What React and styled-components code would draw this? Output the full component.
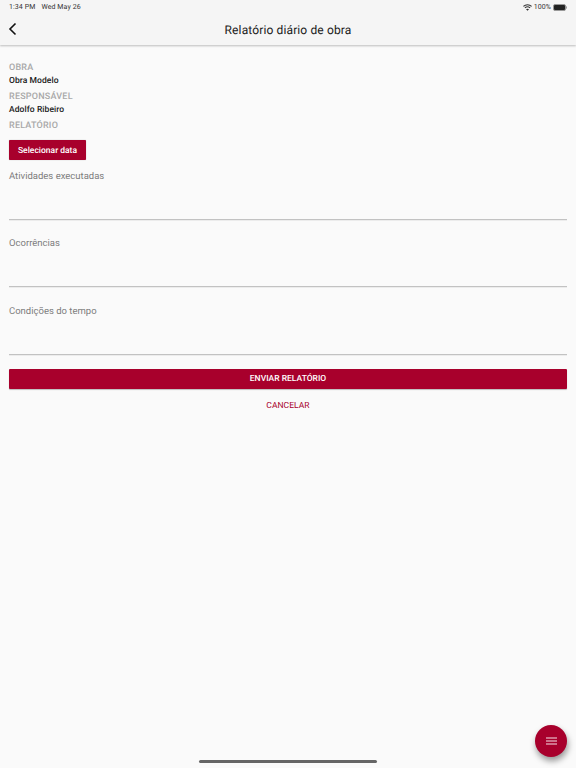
import React from "react";
import styled, { createGlobalStyle } from "styled-components";

const Global = createGlobalStyle`
  html, body { margin: 0; padding: 0; background: #fafafa; }
  body { font-family: Roboto, "Liberation Sans", sans-serif; text-rendering: geometricPrecision; }
`;
const Page = styled.div`
  position: relative; width: 576px; height: 768px; overflow: hidden;
  background: #fafafa; display: flex; flex-direction: column;
`;
const Header = styled.header`
  height: 45px; background: #f5f5f5; flex: none;
  box-shadow: 0 1px 2px rgba(0,0,0,.25);
  display: flex; flex-direction: column; position: relative;
`;
const StatusBar = styled.div`
  height: 14px; display: flex; justify-content: space-between; align-items: center;
  padding: 0 9px; font-size: 7px; color: #333; letter-spacing: .1px;
`;
const StatusGroup = styled.div`display: flex; align-items: center; gap: ${p => p.$gap || 3}px;`;
const NavBar = styled.div`
  flex: 1; display: flex; align-items: center; justify-content: center; position: relative;
`;
const Title = styled.h1`
  margin: 0; font-size: 12px; font-weight: 400; color: #212121; letter-spacing: .13px;
`;
const BackButton = styled.div`
  position: absolute; left: 8px; top: 8px; width: 10px; height: 14px; display: flex;
`;
const Content = styled.main`
  padding: 18px 9px 0; display: flex; flex-direction: column;
`;
const Caption = styled.div`
  font-size: 9px; font-weight: 500; color: #a8a8a8; letter-spacing: .22px; line-height: 11px;
`;
const Value = styled.div`
  font-size: 8.5px; font-weight: 500; color: #212121; letter-spacing: .08px;
  line-height: 11px; margin: 2px 0 5px;
`;
const DateButton = styled.div`
  width: 77px; height: 20px; margin-top: 8px; padding-top: 1px; box-sizing: border-box;
  background: #a8002c; color: #fff;
  border-radius: 1px; box-shadow: 0 0 1px rgba(0,0,0,.4); display: flex; align-items: center;
  justify-content: center; font-size: 8.5px; font-weight: 500;
`;
const Field = styled.div`
  height: 49px; margin-top: ${p => p.$top}px; border-bottom: 1px solid #c2c2c2;
  box-shadow: 0 1px 0 #ececec; font-size: 9.5px; color: #7d7d7d; line-height: 13px;
`;
const SendButton = styled.div`
  height: 20px; margin-top: 14px; background: #a8002c; color: #fff; border-radius: 1px;
  box-shadow: 0 1px 1px rgba(0,0,0,.25); display: flex; align-items: center; justify-content: center;
  font-size: 8.5px; font-weight: 500;
`;
const CancelButton = styled.div`
  height: 20px; margin-top: 7px; color: #a8002c; display: flex; align-items: center;
  justify-content: center; font-size: 8.5px; letter-spacing: .05px;
`;
const Fab = styled.div`
  position: absolute; left: 535px; top: 725px; width: 32px; height: 32px; border-radius: 50%;
  background: #a8002c; box-shadow: 1px 4px 6px rgba(0,0,0,.4);
  display: flex; align-items: center; justify-content: center;
`;
const HomeIndicator = styled.div`
  position: absolute; left: 199px; top: 760px; width: 178px; height: 3px; border-radius: 2px; background: #666;
`;

export default function App() {
  return (
    <Page>
      <Global />
      <Header>
        <StatusBar>
          <StatusGroup $gap={6}><span>1:34 PM</span><span>Wed May 26</span></StatusGroup>
          <StatusGroup $gap={2}>
            <svg width="9" height="7" viewBox="0 0 9 7" fill="none" stroke="#333"><path d="M.4 2.4C2.7.2 6.3.2 8.6 2.4" strokeWidth="1.1"/><path d="M1.9 3.9C3.4 2.6 5.6 2.6 7.1 3.9" strokeWidth="1.1"/><path d="M4.5 6.8 3 5.3C3.9 4.6 5.1 4.6 6 5.3z" fill="#333" stroke="none"/></svg>
            <span>100%</span>
            <svg width="14" height="7" viewBox="0 0 14 7"><rect x=".5" y=".5" width="12" height="6" rx="1.5" fill="#222" stroke="#999"/><rect x="13" y="2.4" width="1" height="2.2" fill="#999"/></svg>
          </StatusGroup>
        </StatusBar>
        <NavBar>
          <BackButton>
            <svg width="10" height="14" viewBox="0 0 10 14"><path d="M7.5 1.5 2 7l5.5 5.5" fill="none" stroke="#111" strokeWidth="1.6"/></svg>
          </BackButton>
          <Title>Relatório diário de obra</Title>
        </NavBar>
      </Header>
      <Content>
        <Caption>OBRA</Caption>
        <Value>Obra Modelo</Value>
        <Caption>RESPONSÁVEL</Caption>
        <Value>Adolfo Ribeiro</Value>
        <Caption>RELATÓRIO</Caption>
        <DateButton>Selecionar data</DateButton>
        <Field $top={10}>Atividades executadas</Field>
        <Field $top={17}>Ocorrências</Field>
        <Field $top={18}>Condições do tempo</Field>
        <SendButton>ENVIAR RELATÓRIO</SendButton>
        <CancelButton>CANCELAR</CancelButton>
      </Content>
      <Fab>
        <svg width="11" height="8" viewBox="0 0 11 8"><path d="M0 1h11M0 4h11M0 7h11" stroke="#f5e3e8" strokeWidth="1"/></svg>
      </Fab>
      <HomeIndicator />
    </Page>
  );
}
